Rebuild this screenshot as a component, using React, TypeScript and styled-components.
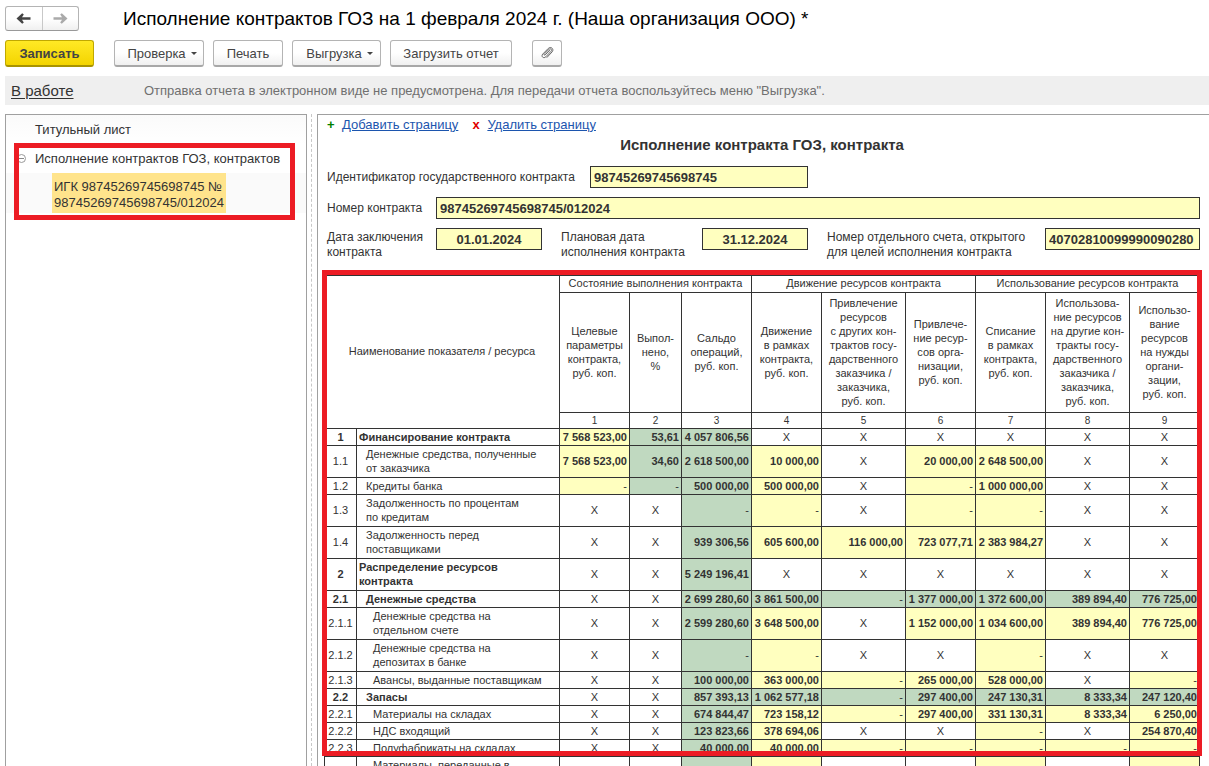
import React, { Fragment } from "react";
import styled, { createGlobalStyle, css } from "styled-components";

const GlobalStyle = createGlobalStyle`
  *, *::before, *::after { box-sizing: border-box; }
  body {
    margin: 0;
    background: #fff;
    color: #333;
    font-family: "Liberation Sans", Arial, sans-serif;
    font-size: 13px;
    overflow: hidden;
  }
  button, input { font: inherit; color: inherit; }
`;

const Page = styled.div`
  display: flex;
  flex-direction: column;
  height: 100vh;
`;

const TitleBar = styled.header`
  display: flex;
  align-items: center;
  gap: 44px;
  padding: 6px 5px 0;
`;

const NavGroup = styled.div`
  display: flex;
  flex: none;
  width: 74px;
  height: 25px;
  border: 1px solid #b4b4b4;
  border-bottom-color: #999;
  border-radius: 3px;
  background: linear-gradient(#fff 50%, #f0f0f0);
`;

const NavButton = styled.button`
  flex: 1;
  display: flex;
  align-items: center;
  justify-content: center;
  padding: 0;
  border: 0;
  background: none;
  color: #444;
  & + & {
    border-left: 1px solid #c8c8c8;
    color: #aaa;
  }
`;

const PageTitle = styled.h1`
  margin: 0;
  font-size: 19px;
  font-weight: 400;
  line-height: 25px;
  color: #000;
  white-space: nowrap;
`;

const Toolbar = styled.div`
  display: flex;
  gap: 9px;
  padding: 9px 5px 9px;
`;

const ToolButton = styled.button<{ $width: number; $primary?: boolean; $apart?: boolean; $menu?: boolean }>`
  display: flex;
  align-items: center;
  justify-content: center;
  gap: 5px;
  flex: none;
  width: ${(p) => p.$width}px;
  height: 27px;
  padding: 0 0 0 ${(p) => (p.$menu ? 6 : 0)}px;
  border: 1px solid #b4b4b4;
  border-bottom: 2px solid #a8a8a8;
  border-radius: 3px;
  background: linear-gradient(#fff 50%, #f0f0f0);
  color: #444;
  white-space: nowrap;
  ${(p) => p.$apart && css`margin-left: 11px;`}
  ${(p) =>
    p.$primary &&
    css`
      border-color: #c0a800;
      border-bottom-color: #a89300;
      background: linear-gradient(#ffe925, #f3d400);
      font-weight: 700;
    `}
`;

const Caret = styled.span`
  border: 3px solid transparent;
  border-top-color: #444;
  border-bottom: 0;
`;

const StatusBar = styled.div`
  display: flex;
  align-items: center;
  height: 29px;
  margin-left: 5px;
  padding-left: 6px;
  background: #efefef;
  color: #707070;
  white-space: nowrap;
`;

const StatusLink = styled.a`
  width: 133px;
  font-size: 15px;
  color: #333;
  text-underline-offset: 2px;
`;

const Workspace = styled.div`
  flex: 1;
  display: flex;
  min-height: 0;
  margin: 9px 0 0 5px;
`;

const TreePane = styled.nav`
  flex: none;
  width: 302px;
  border: 1px solid #a0a0a0;
  border-bottom: 0;
`;

const TreeItem = styled.a`
  display: block;
  padding: 0 0 0 29px;
  line-height: 29px;
  color: #333;
  text-decoration: none;
  white-space: nowrap;
  background: linear-gradient(#fafafa, #fff);
`;

const MarkedBranch = styled.div`
  position: relative;
`;

const BranchHead = styled.div`
  display: flex;
  align-items: center;
  gap: 9px;
  padding-left: 11px;
  ${TreeItem} {
    padding-left: 0;
    background: none;
  }
`;

const Collapse = styled.button`
  display: flex;
  padding: 0;
  border: 0;
  background: none;
`;

const SelectedRow = styled.div`
  padding-left: 46px;
  background: #fafafa;
`;

const SelectedLink = styled.a`
  display: block;
  width: 174px;
  padding: 6px 0 2px 2px;
  background: #ffe48c;
  color: #333;
  line-height: 16px;
  text-decoration: none;
`;

const Marker = styled.div<{ $top: number; $left: number; $right: number; $height: number }>`
  position: absolute;
  top: ${(p) => p.$top}px;
  left: ${(p) => p.$left}px;
  right: ${(p) => p.$right}px;
  height: ${(p) => p.$height}px;
  border: 5px solid #ec1c24;
  pointer-events: none;
`;

const Splitter = styled.div`
  flex: none;
  width: 5px;
  margin-right: 5px;
  border-right: 1px dashed #c8c8c8;
`;

const ReportPane = styled.main`
  flex: 1;
  min-width: 0;
  overflow: hidden;
  padding: 0 9px 0 6px;
  border: 1px solid #a0a0a0;
  border-right: 0;
  border-bottom: 0;
`;

const PageActions = styled.div`
  display: flex;
  align-items: center;
  padding-left: 3px;
  line-height: 20px;
`;

const Sign = styled.span<{ $color: string }>`
  width: 15px;
  font-weight: 700;
  color: ${(p) => p.$color};
`;

const ActionLink = styled.a`
  margin-right: 14px;
  color: #1c55ae;
`;

const ReportTitle = styled.h2`
  margin: 0 0 12px;
  font-size: 15px;
  line-height: 19px;
  text-align: center;
`;

const FormRow = styled.div`
  display: flex;
  height: 22px;
  margin-bottom: 9px;
  padding-left: 3px;
`;

const Label = styled.label<{ $width: number; $double?: boolean }>`
  flex: none;
  width: ${(p) => p.$width}px;
  padding-top: ${(p) => (p.$double ? 2 : 0)}px;
  font-size: 12px;
  line-height: ${(p) => (p.$double ? 15 : 22)}px;
  white-space: nowrap;
`;

const Field = styled.input<{ $width?: number; $center?: boolean }>`
  ${(p) => (p.$width ? css`flex: none; width: ${p.$width}px; margin-right: 19px;` : css`flex: 1;`)}
  min-width: 0;
  height: 22px;
  padding: 0 3px;
  border: 1px solid #333;
  border-radius: 0;
  background: #ffffbf;
  font-weight: 700;
  text-align: ${(p) => (p.$center ? "center" : "left")};
`;

const TableFrame = styled.div`
  position: relative;
  margin-top: 25px;
`;

const Table = styled.table`
  width: 100%;
  table-layout: fixed;
  border-collapse: collapse;
  font-size: 11px;
  line-height: 14px;
`;

const HeadCell = styled.th`
  padding: 0 0 2px;
  border: 1px solid #333;
  font-weight: 400;
  white-space: nowrap;
`;

const NumberCell = styled(HeadCell)`
  padding: 0;
  font-size: 10px;
`;

const Row = styled.tr<{ $height: number }>`
  height: ${(p) => p.$height}px;
`;

const CodeCell = styled.td<{ $bold?: boolean; $double: boolean }>`
  padding: 0 0 ${(p) => (p.$double ? 2 : 0)}px;
  border: 1px solid #333;
  text-align: center;
  font-weight: ${(p) => (p.$bold ? 700 : 400)};
`;

const NameCell = styled.th<{ $bold?: boolean; $level: number; $double: boolean }>`
  padding: 0 0 ${(p) => (p.$double ? 2 : 0)}px ${(p) => 2 + p.$level * 7}px;
  border: 1px solid #333;
  text-align: left;
  font-weight: ${(p) => (p.$bold ? 700 : 400)};
  white-space: nowrap;
`;

const fills = { w: "transparent", y: "#ffffbf", g: "#c0d9c0" };

const ValueCell = styled.td<{ $fill: keyof typeof fills; $cross: boolean; $light: boolean; $double: boolean }>`
  padding: 0 ${(p) => (p.$cross ? 0 : 2)}px ${(p) => (p.$double ? 2 : 0)}px 0;
  border: 1px solid #333;
  background: ${(p) => fills[p.$fill]};
  text-align: ${(p) => (p.$cross ? "center" : "right")};
  font-weight: ${(p) => (p.$light ? 400 : 700)};
  white-space: nowrap;
`;

const columnWidths = [70, 52, 70, 70, 84, 70, 70, 84, 70];

const columnTitles = [
  "Целевые|параметры|контракта,|руб. коп.",
  "Выпол-|нено,|%",
  "Сальдо|операций,|руб. коп.",
  "Движение|в рамках|контракта,|руб. коп.",
  "Привлечение|ресурсов|с других кон-|трактов госу-|дарственного|заказчика /|заказчика,|руб. коп.",
  "Привлече-|ние ресур-|сов орга-|низации,|руб. коп.",
  "Списание|в рамках|контракта,|руб. коп.",
  "Использова-|ние ресурсов|на другие кон-|тракты госу-|дарственного|заказчика /|заказчика,|руб. коп.",
  "Использо-|вание|ресурсов|на нужды|органи-|зации,|руб. коп.",
];

type Line = { code: string; name: string; level: number; bold?: boolean; fill: string; values: string };

const lines: Line[] = [
  { code: "1", name: "Финансирование контракта", level: 0, bold: true, fill: "yggwwwwww", values: "7 568 523,00|53,61|4 057 806,56|X|X|X|X|X|X" },
  { code: "1.1", name: "Денежные средства, полученные|от заказчика", level: 1, fill: "yggywyyww", values: "7 568 523,00|34,60|2 618 500,00|10 000,00|X|20 000,00|2 648 500,00|X|X" },
  { code: "1.2", name: "Кредиты банка", level: 1, fill: "yggywyyww", values: "-|-|500 000,00|500 000,00|X|-|1 000 000,00|X|X" },
  { code: "1.3", name: "Задолженность по процентам|по кредитам", level: 1, fill: "wwgywyyww", values: "X|X|-|-|X|-|-|X|X" },
  { code: "1.4", name: "Задолженность перед|поставщиками", level: 1, fill: "wwgyyyyww", values: "X|X|939 306,56|605 600,00|116 000,00|723 077,71|2 383 984,27|X|X" },
  { code: "2", name: "Распределение ресурсов|контракта", level: 0, bold: true, fill: "wwgwwwwww", values: "X|X|5 249 196,41|X|X|X|X|X|X" },
  { code: "2.1", name: "Денежные средства", level: 1, bold: true, fill: "wwggggggg", values: "X|X|2 699 280,60|3 861 500,00|-|1 377 000,00|1 372 600,00|389 894,40|776 725,00" },
  { code: "2.1.1", name: "Денежные средства на|отдельном счете", level: 2, fill: "wwgywyyyy", values: "X|X|2 599 280,60|3 648 500,00|X|1 152 000,00|1 034 600,00|389 894,40|776 725,00" },
  { code: "2.1.2", name: "Денежные средства на|депозитах в банке", level: 2, fill: "wwgywwyww", values: "X|X|-|-|X|X|-|X|X" },
  { code: "2.1.3", name: "Авансы, выданные поставщикам", level: 2, fill: "wwgyyyywy", values: "X|X|100 000,00|363 000,00|-|265 000,00|528 000,00|X|-" },
  { code: "2.2", name: "Запасы", level: 1, bold: true, fill: "wwggggggg", values: "X|X|857 393,13|1 062 577,18|-|297 400,00|247 130,31|8 333,34|247 120,40" },
  { code: "2.2.1", name: "Материалы на складах", level: 2, fill: "wwgyyyyyy", values: "X|X|674 844,47|723 158,12|-|297 400,00|331 130,31|8 333,34|6 250,00" },
  { code: "2.2.2", name: "НДС входящий", level: 2, fill: "wwgywwywy", values: "X|X|123 823,66|378 694,06|X|X|-|X|254 870,40" },
  { code: "2.2.3", name: "Полуфабрикаты на складах", level: 2, fill: "wwgyyyyyy", values: "X|X|40 000,00|40 000,00|-|-|-|-|-" },
  { code: "2.2.4", name: "Материалы, переданные в|переработку", level: 2, fill: "wwgywwywy", values: "X|X|-|-|X|X|-|X|-" },
];

const Multiline = ({ text }: { text: string }) => (
  <>
    {text.split("|").map((part, i) => (
      <Fragment key={i}>
        {i > 0 && <br />}
        {part}
      </Fragment>
    ))}
  </>
);

const Arrow = ({ flip }: { flip?: boolean }) => (
  <svg width="15" height="11" viewBox="0 0 15 11" aria-hidden="true">
    <path
      d={
        flip
          ? "M0.5 4.3H9L7.2 1.6L8.8 0.3L14.5 5.5L8.8 10.7L7.2 9.4L9 6.7H0.5Z"
          : "M14.5 4.3H6L7.8 1.6L6.2 0.3L0.5 5.5L6.2 10.7L7.8 9.4L6 6.7H14.5Z"
      }
      fill="currentColor"
    />
  </svg>
);

const Clip = () => (
  <svg width="14" height="14" viewBox="0 0 14 14" aria-hidden="true">
    <path
      d="M9.8 4.4L5.2 8.8C4.4 9.6 3.6 8.8 4.3 8L9 3.4C10.6 1.9 12.4 3.7 11 5.3L5.8 10.8C3.6 13 0.6 10.4 2.8 8L8.3 2.4C10.8 0 14.4 3 12.2 5.8L7 11.4"
      fill="none"
      stroke="#666"
      strokeWidth="1"
      strokeLinecap="round"
    />
  </svg>
);

export default function App() {
  return (
    <Page>
      <GlobalStyle />
      <TitleBar>
        <NavGroup>
          <NavButton type="button" aria-label="Назад"><Arrow /></NavButton>
          <NavButton type="button" aria-label="Вперед"><Arrow flip /></NavButton>
        </NavGroup>
        <PageTitle>Исполнение контрактов ГОЗ на 1 февраля 2024 г. (Наша организация ООО) *</PageTitle>
      </TitleBar>

      <Toolbar>
        <ToolButton type="button" $width={89} $primary>Записать</ToolButton>
        <ToolButton type="button" $width={90} $apart $menu>Проверка<Caret /></ToolButton>
        <ToolButton type="button" $width={70}>Печать</ToolButton>
        <ToolButton type="button" $width={89} $menu>Выгрузка<Caret /></ToolButton>
        <ToolButton type="button" $width={122}>Загрузить отчет</ToolButton>
        <ToolButton type="button" $width={30} $apart aria-label="Файлы"><Clip /></ToolButton>
      </Toolbar>

      <StatusBar>
        <StatusLink href="#status">В работе</StatusLink>
        <span>Отправка отчета в электронном виде не предусмотрена. Для передачи отчета воспользуйтесь меню "Выгрузка".</span>
      </StatusBar>

      <Workspace>
        <TreePane>
          <TreeItem href="#title">Титульный лист</TreeItem>
          <MarkedBranch>
            <BranchHead>
              <Collapse type="button" aria-label="Свернуть">
                <svg width="9" height="9" viewBox="0 0 9 9" aria-hidden="true">
                  <circle cx="4.5" cy="4.5" r="4" fill="none" stroke="#999" />
                  <path d="M2 4.5H7" stroke="#888" />
                </svg>
              </Collapse>
              <TreeItem href="#contracts">Исполнение контрактов ГОЗ, контрактов</TreeItem>
            </BranchHead>
            <SelectedRow>
              <SelectedLink href="#contract">ИГК 98745269745698745 № 98745269745698745/012024</SelectedLink>
            </SelectedRow>
            <Marker $top={-1} $left={8} $right={11} $height={77} />
          </MarkedBranch>
        </TreePane>
        <Splitter />
        <ReportPane>
          <PageActions>
            <Sign $color="#008000">+</Sign>
            <ActionLink href="#add">Добавить страницу</ActionLink>
            <Sign $color="#e00000">x</Sign>
            <ActionLink href="#remove">Удалить страницу</ActionLink>
          </PageActions>
          <ReportTitle>Исполнение контракта ГОЗ, контракта</ReportTitle>
          <FormRow>
            <Label htmlFor="igk" $width={263}>Идентификатор государственного контракта</Label>
            <Field id="igk" $width={218} defaultValue="98745269745698745" />
          </FormRow>
          <FormRow>
            <Label htmlFor="number" $width={109}>Номер контракта</Label>
            <Field id="number" defaultValue="98745269745698745/012024" />
          </FormRow>
          <FormRow>
            <Label htmlFor="signed" $width={109} $double>Дата заключения<br />контракта</Label>
            <Field id="signed" $width={106} $center defaultValue="01.01.2024" />
            <Label htmlFor="planned" $width={141} $double>Плановая дата<br />исполнения контракта</Label>
            <Field id="planned" $width={106} $center defaultValue="31.12.2024" />
            <Label htmlFor="account" $width={218} $double>Номер отдельного счета, открытого<br />для целей исполнения контракта</Label>
            <Field id="account" defaultValue="40702810099990090280" />
          </FormRow>

          <TableFrame>
            <Table>
              <colgroup>
                <col width={32} />
                <col />
                {columnWidths.map((w, i) => <col key={i} width={w} />)}
              </colgroup>
              <thead>
                <Row $height={17}>
                  <HeadCell colSpan={2} rowSpan={3}>Наименование показателя / ресурса</HeadCell>
                  <HeadCell colSpan={3}>Состояние выполнения контракта</HeadCell>
                  <HeadCell colSpan={3}>Движение ресурсов контракта</HeadCell>
                  <HeadCell colSpan={3}>Использование ресурсов контракта</HeadCell>
                </Row>
                <Row $height={120}>
                  {columnTitles.map((t, i) => <HeadCell key={i}><Multiline text={t} /></HeadCell>)}
                </Row>
                <Row $height={16}>
                  {columnTitles.map((_, i) => <NumberCell key={i}>{i + 1}</NumberCell>)}
                </Row>
              </thead>
              <tbody>
                {lines.map((line) => {
                  const double = line.name.includes("|");
                  return (
                    <Row key={line.code} $height={double ? 32 : 17}>
                      <CodeCell $bold={line.bold} $double={double}>{line.code}</CodeCell>
                      <NameCell scope="row" $bold={line.bold} $level={line.level} $double={double}>
                        <Multiline text={line.name} />
                      </NameCell>
                      {line.values.split("|").map((v, i) => (
                        <ValueCell
                          key={i}
                          $fill={line.fill[i] as keyof typeof fills}
                          $cross={v === "X"}
                          $light={v === "X" || v === "-"}
                          $double={double}
                        >
                          {v}
                        </ValueCell>
                      ))}
                    </Row>
                  );
                })}
              </tbody>
            </Table>
            <Marker $top={-5} $left={-2} $right={-2} $height={486} />
          </TableFrame>
        </ReportPane>
      </Workspace>
    </Page>
  );
}
